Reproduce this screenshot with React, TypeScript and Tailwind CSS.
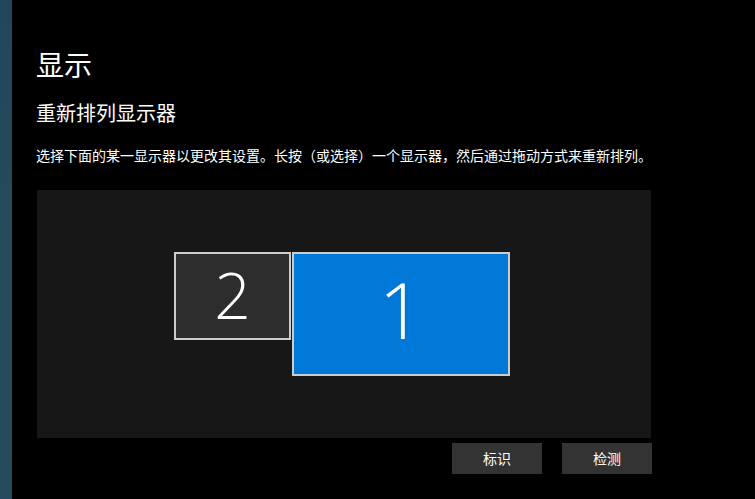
import { useState } from "react";

export default function App() {
  const [selected, setSelected] = useState(1);
  const fill = (id: number) => (selected === id ? "bg-[#0078d7]" : "bg-[#2d2d2d]");

  return (
    <div className="flex min-h-screen bg-black font-['Noto_Sans_CJK_SC',sans-serif] text-white">
      <div
        aria-hidden="true"
        className="w-3 shrink-0 bg-linear-to-b from-[#22475c] via-[#264b5b] to-[#244a5d]"
      />
      <main className="min-w-0 flex-1 px-6 pt-11 pb-6">
        <div className="max-w-[616px]">
          <h1 className="text-[28px] leading-10 font-normal">显示</h1>
          <h2 className="mt-[13px] text-xl leading-8 font-normal">重新排列显示器</h2>
          <p className="mt-3.5 text-sm leading-6">
            选择下面的某一显示器以更改其设置。长按（或选择）一个显示器，然后通过拖动方式来重新排列。
          </p>
          <div className="mx-px mt-[23px] flex h-[248px] items-start justify-center gap-px bg-[#171717] pt-[62px] pr-1 font-['Open_Sans',sans-serif] font-light">
            <button
              type="button"
              onClick={() => setSelected(2)}
              className={`flex h-[88px] w-[117px] items-center justify-center border-2 border-[#cccccc] pb-0.5 text-[64px] leading-none ${fill(2)}`}
            >
              2
            </button>
            <button
              type="button"
              onClick={() => setSelected(1)}
              className={`flex h-[124px] w-[218px] items-center justify-center border-2 border-[#cccccc] pb-2.5 text-[78px] leading-none ${fill(1)}`}
            >
              1
            </button>
          </div>
          <div className="mt-[5px] flex justify-end gap-5 text-sm">
            <button type="button" className="h-[31px] w-[90px] bg-[#333333] pb-0.5">
              标识
            </button>
            <button type="button" className="h-[31px] w-[90px] bg-[#333333] pb-0.5">
              检测
            </button>
          </div>
        </div>
      </main>
    </div>
  );
}
